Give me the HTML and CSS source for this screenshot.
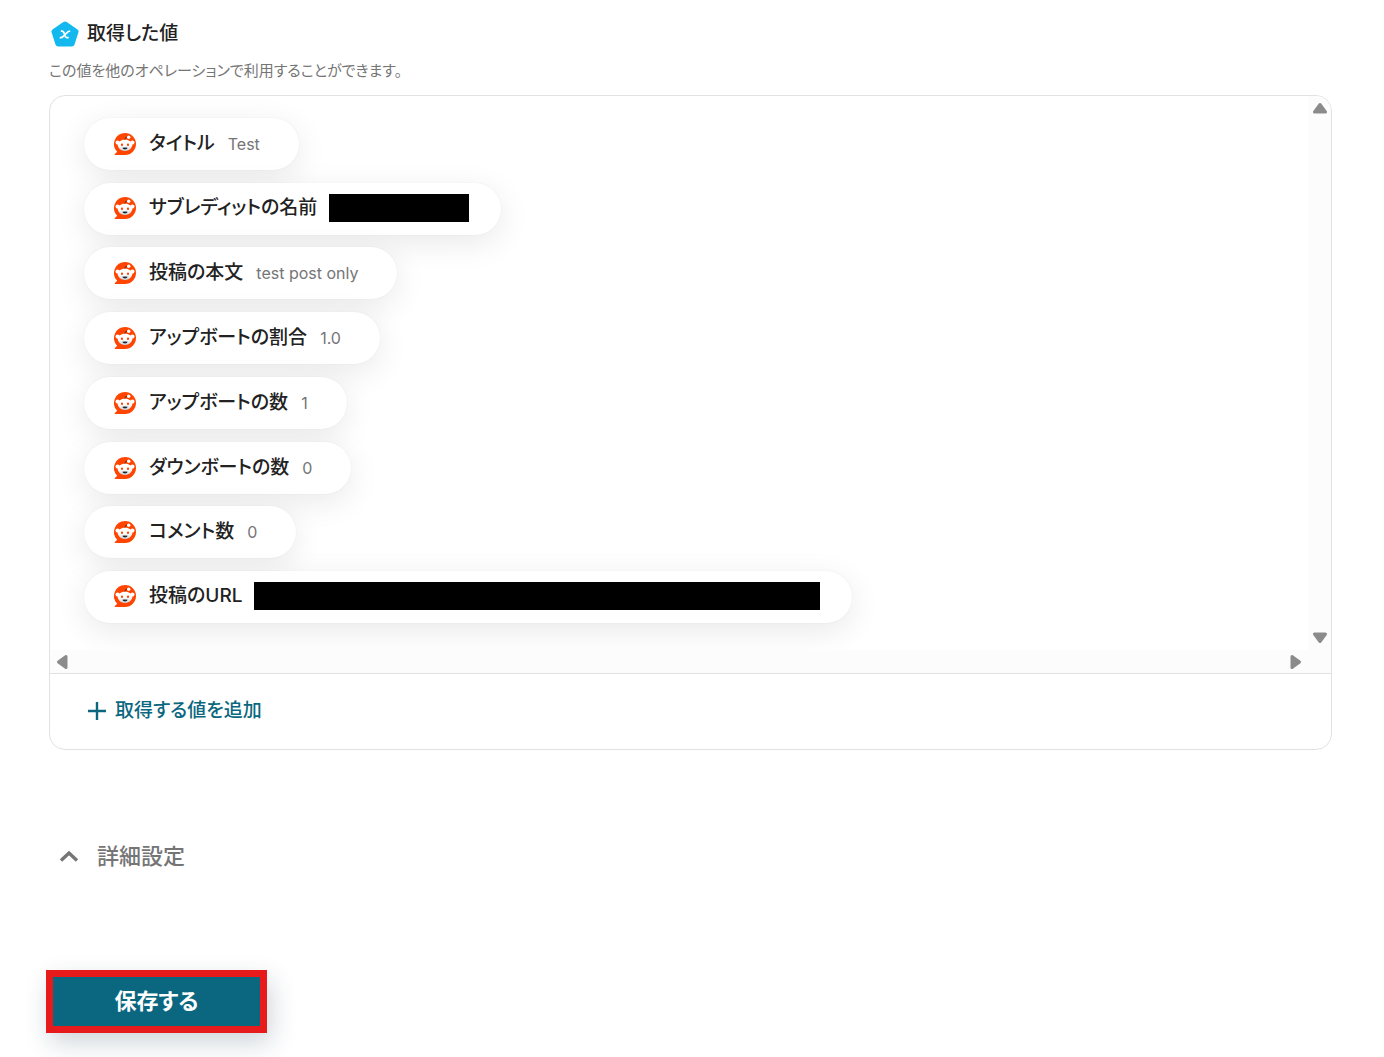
FILE: index.html
```html
<!DOCTYPE html>
<html lang="ja">
<head>
<meta charset="utf-8">
<meta name="viewport" content="width=device-width, initial-scale=1">
<title>取得した値</title>
<link rel="stylesheet" href="styles.css">
</head>
<body>
<svg class="sprite" aria-hidden="true">
  <defs>
    <linearGradient id="face" x1="0" y1="0" x2="0" y2="1">
      <stop offset="0.5" stop-color="#fff"/>
      <stop offset="1" stop-color="#c9d3d8"/>
    </linearGradient>
    <symbol id="reddit" viewBox="0 0 22 22">
      <path fill="#ff4500" d="M11 0a11 11 0 1 1 0 22H1.300q-1.200-.2-.4-1.100L3.200 18.700A11 11 0 0 1 11 0z"/>
      <circle cx="3.600" cy="9.600" r="2.100" fill="#fff"/>
      <circle cx="18.400" cy="9.600" r="2.100" fill="#fff"/>
      <ellipse cx="11" cy="12.300" rx="7.200" ry="5.700" fill="url(#face)"/>
      <path d="M10.800 6.700q.1-2.500 2.800-2.800" fill="none" stroke="#4a2010" stroke-width=".8"/>
      <circle cx="14.700" cy="4.200" r="1.700" fill="#fff"/>
      <ellipse cx="8" cy="11.700" rx="1.100" ry="1.300" fill="#ff4500"/>
      <ellipse cx="14" cy="11.700" rx="1.100" ry="1.300" fill="#ff4500"/>
      <path d="M8.300 14.700q2.700-.5 5.400 0-.6 1.800-2.700 1.800t-2.700-1.800z" fill="#1a2730"/>
    </symbol>
    <symbol id="arrow" viewBox="0 0 16 12">
      <path d="M8 2.500 13.500 10H2.500z" fill="#8b8b8b" stroke="#8b8b8b" stroke-width="3" stroke-linejoin="round"/>
    </symbol>
  </defs>
</svg>
<main class="page">
  <header class="heading">
    <svg class="heading-icon" viewBox="0 0 28 26" aria-hidden="true">
      <path d="M14 3.500 24.500 10.700 20.700 22.500H7.300L3.500 10.700z" fill="#13b9ee" stroke="#13b9ee" stroke-width="6" stroke-linejoin="round"/>
      <path d="M9.800 10.200h1.200q1.400 0 1.900 1.400l1.200 3.400q.6 1.600 1.900 1.600h1.700M19.200 10.300q-1.700-.3-2.900 1.100l-4.300 4.300q-1.200 1.300-3.300.9" fill="none" stroke="#fff" stroke-width="1.700"/>
    </svg>
    <h1>取得した値</h1>
  </header>
  <p class="note">この値を他のオペレーションで利用することができます。</p>

  <section class="card">
    <div class="viewport">
      <ul class="values">
        <li class="pill"><svg class="logo"><use href="#reddit"/></svg><span class="name">タイトル</span><span class="value">Test</span></li>
        <li class="pill masked"><svg class="logo"><use href="#reddit"/></svg><span class="name">サブレディットの名前</span><span class="mask mask-short"></span></li>
        <li class="pill"><svg class="logo"><use href="#reddit"/></svg><span class="name">投稿の本文</span><span class="value">test post only</span></li>
        <li class="pill"><svg class="logo"><use href="#reddit"/></svg><span class="name">アップボートの割合</span><span class="value">1.0</span></li>
        <li class="pill"><svg class="logo"><use href="#reddit"/></svg><span class="name">アップボートの数</span><span class="value">1</span></li>
        <li class="pill"><svg class="logo"><use href="#reddit"/></svg><span class="name">ダウンボートの数</span><span class="value">0</span></li>
        <li class="pill"><svg class="logo"><use href="#reddit"/></svg><span class="name">コメント数</span><span class="value">0</span></li>
        <li class="pill masked"><svg class="logo"><use href="#reddit"/></svg><span class="name">投稿のURL</span><span class="mask mask-long"></span></li>
      </ul>
      <div class="bar bar-y">
        <button type="button" aria-label="上へ"><svg class="arrow"><use href="#arrow"/></svg></button>
        <button type="button" aria-label="下へ"><svg class="arrow down"><use href="#arrow"/></svg></button>
      </div>
      <div class="bar bar-x">
        <button type="button" aria-label="左へ"><svg class="arrow left"><use href="#arrow"/></svg></button>
        <button type="button" aria-label="右へ"><svg class="arrow right"><use href="#arrow"/></svg></button>
      </div>
      <div class="bar"></div>
    </div>
    <div class="card-foot">
      <button class="add" type="button">
        <svg class="plus" viewBox="0 0 18 18" aria-hidden="true"><path d="M9 0v18M0 9h18" stroke="#0b6780" stroke-width="2.400"/></svg>
        取得する値を追加
      </button>
    </div>
  </section>

  <button class="advanced" type="button" aria-expanded="false">
    <svg class="chevron" viewBox="0 0 20 12" aria-hidden="true"><path d="M2 10.500 10 3l8 7.500" fill="none" stroke="#757575" stroke-width="3.400"/></svg>
    詳細設定
  </button>

  <button class="save" type="button">保存する</button>
</main>
</body>
</html>
```
FILE: styles.css
```css
* {
  box-sizing: border-box;
}

body {
  margin: 0;
  background: #fff;
  color: #222;
  font-family: Inter, "Noto Sans CJK JP", sans-serif;
  font-feature-settings: "palt";
}

button {
  border: 0;
  padding: 0;
  background: none;
  font: inherit;
  font-feature-settings: inherit;
  cursor: pointer;
}

svg {
  display: block;
  flex: none;
}

.sprite {
  position: absolute;
  width: 0;
  height: 0;
}

.page {
  display: flex;
  flex-direction: column;
  align-items: flex-start;
  padding: 18px 52px 24px 49px;
}

.heading {
  display: flex;
  align-items: center;
  gap: 8px;
  padding-left: 2px;
  height: 32px;
}

.heading-icon {
  width: 28px;
  height: 26px;
}

h1 {
  margin: 0;
  font-size: 19px;
  font-weight: 500;
  line-height: 32px;
}

.note {
  margin: 9px 0 13px;
  color: #757575;
  font-size: 15px;
  line-height: 23px;
}

.card {
  align-self: stretch;
  border: 1px solid #e2e2e2;
  border-radius: 16px;
  overflow: hidden;
}

.viewport {
  display: grid;
  grid-template-columns: 1fr 23px;
  grid-template-rows: auto 23px;
  border-bottom: 1px solid #e2e2e2;
}

.values {
  display: flex;
  flex-direction: column;
  align-items: flex-start;
  justify-content: space-between;
  min-height: 554px;
  margin: 0;
  padding: 22px 34px 27px;
  list-style: none;
  overflow: hidden;
}

.pill {
  display: flex;
  align-items: center;
  height: 52px;
  padding: 0 39px 0 30px;
  border-radius: 26px;
  background: #fff;
  box-shadow: 0 8px 32px rgba(0, 0, 0, 0.09), 0 0 2px rgba(0, 0, 0, 0.06);
}

.masked {
  padding: 0 32px 2px 30px;
}

.logo {
  width: 22px;
  height: 22px;
  margin-right: 13px;
}

.name {
  font-size: 19px;
  font-weight: 500;
  line-height: 28px;
}

.value {
  margin-left: 13px;
  color: #757575;
  font-size: 16px;
  line-height: 28px;
}

.mask {
  height: 28px;
  margin-left: 12px;
  background: #000;
}

.mask-short {
  width: 140px;
}

.mask-long {
  width: 566px;
}

.bar {
  display: flex;
  align-items: center;
  justify-content: space-between;
  background: #fcfcfc;
}

.bar-y {
  flex-direction: column;
  padding: 6px 0;
}

.bar-x {
  padding: 0 4px;
}

.arrow {
  width: 16px;
  height: 12px;
}

.down {
  transform: rotate(180deg);
}

.left {
  transform: rotate(-90deg);
}

.right {
  transform: rotate(90deg);
}

.card-foot {
  display: flex;
  align-items: center;
  height: 75px;
  padding: 0 38px 2px;
}

.add {
  display: flex;
  align-items: center;
  gap: 9px;
  color: #0b6780;
  font-size: 19px;
  font-weight: 500;
  line-height: 28px;
}

.plus {
  width: 18px;
  height: 18px;
}

.advanced {
  display: flex;
  align-items: center;
  gap: 18px;
  margin: 90px 0 98px;
  padding-left: 10px;
  color: #757575;
  font-size: 22px;
  font-weight: 500;
  line-height: 32px;
}

.chevron {
  width: 20px;
  height: 12px;
}

.save {
  width: 221px;
  height: 63px;
  margin-left: -3px;
  padding-bottom: 2px;
  border: 7px solid #e71b1b;
  background: #0b6780;
  box-shadow: 4px 10px 26px rgba(20, 50, 70, 0.2);
  color: #fff;
  font-size: 22px;
  font-weight: 700;
  line-height: 32px;
}
```
